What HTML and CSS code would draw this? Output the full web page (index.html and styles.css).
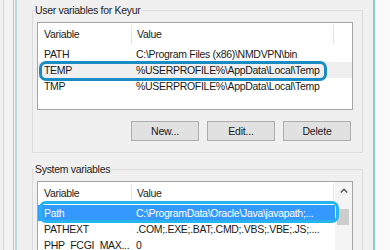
FILE: index.html
```html
<!DOCTYPE html>
<html lang="en">
<head>
    <meta charset="UTF-8">
    <meta name="viewport" content="width=device-width, initial-scale=1.0">
    <title>Environment Variables</title>
    <link rel="stylesheet" href="styles.css">
</head>
<body>

<div class="window">
    <div class="frame-left"></div>

    <div class="content">
        <!-- User variables -->
        <fieldset class="group">
            <legend>User variables for Keyur</legend>
            <div class="list user-list">
                <div class="list-body">
                    <div class="list-head">
                        <span class="col-var">Variable</span>
                        <span class="col-val">Value</span>
                    </div>
                    <div class="row">
                        <span class="col-var">PATH</span>
                        <span class="col-val">C:\Program Files (x86)\NMDVPN\bin</span>
                    </div>
                    <div class="row inactive mark-dark">
                        <span class="col-var">TEMP</span>
                        <span class="col-val">%USERPROFILE%\AppData\Local\Temp</span>
                    </div>
                    <div class="row">
                        <span class="col-var">TMP</span>
                        <span class="col-val">%USERPROFILE%\AppData\Local\Temp</span>
                    </div>
                </div>
            </div>
            <div class="buttons">
                <button class="button">New...</button>
                <button class="button">Edit...</button>
                <button class="button">Delete</button>
            </div>
        </fieldset>

        <!-- System variables -->
        <fieldset class="group system">
            <legend>System variables</legend>
            <div class="list system-list">
                <div class="list-body">
                    <div class="list-head">
                        <span class="col-var">Variable</span>
                        <span class="col-val">Value</span>
                    </div>
                    <div class="row selected mark-light">
                        <span class="col-var">Path</span>
                        <span class="col-val">C:\ProgramData\Oracle\Java\javapath;...</span>
                    </div>
                    <div class="row">
                        <span class="col-var">PATHEXT</span>
                        <span class="col-val">.COM;.EXE;.BAT;.CMD;.VBS;.VBE;.JS;....</span>
                    </div>
                    <div class="row">
                        <span class="col-var">PHP_FCGI_MAX...</span>
                        <span class="col-val">0</span>
                    </div>
                </div>
                <div class="scrollbar">
                    <div class="scroll-up">
                        <svg width="8" height="5" viewBox="0 0 8 5">
                            <path d="M0.8 4.4 L4 1.2 L7.2 4.4" fill="none" stroke="#555" stroke-width="1.4"/>
                        </svg>
                    </div>
                    <div class="thumb"></div>
                </div>
            </div>
        </fieldset>
    </div>

    <div class="frame-right"></div>
</div>

</body>
</html>
```

FILE: styles.css
```css
/* Windows 8 style environment variables dialog */
body {
    margin: 0;
    background-color: #f0f0f0;
    font-family: "Liberation Sans", Arial, sans-serif;
    font-size: 10.5px;
    letter-spacing: -0.3px;
    color: #1a1a1a;
    overflow: hidden;
}
.window {
    display: flex;
    height: 250px;
    overflow: hidden;
}
.frame-left {
    width: 17px;
    flex: none;
    background: linear-gradient(to right,
        #f0f0f0 0, #f0f0f0 3px, #d6d6d6 3px, #d6d6d6 4px,
        #f2f2f2 4px, #f2f2f2 13px, #c4c4c4 13px, #c4c4c4 14px,
        #eef4f4 14px, #eef4f4 15px, #bcdcdc 15px, #bcdcdc 17px);
}
.content {
    width: 356px;
    flex: none;
}
.frame-right {
    flex: 1;
    background-color: #fafafa;
    border-left: 2px solid #86cdc6;
}
.group {
    margin: 3px 10px 0 15px;
    padding: 5px 9px 11px 4px;
    border: 1px solid #dcdcdc;
    min-width: 0;
}
.group legend {
    margin-left: -3px;
    padding: 0 1px;
    line-height: 14px;
    color: #222;
}
.system {
    margin-top: 9px;
}
.list {
    display: flex;
    background-color: #fff;
    border: 1px solid #a5a5a5;
}
.user-list {
    height: 86px;
}
.system-list {
    height: 80px;
}
.list-body {
    flex: 1;
}
.list-head {
    display: flex;
    height: 23px;
    align-items: center;
}
.list-head .col-var {
    border-right: 1px solid #e5e5e5;
    height: 19px;
    line-height: 19px;
}
.list-head .col-val {
    width: 196px;
    flex: none;
    border-right: 1px solid #e5e5e5;
    height: 19px;
    line-height: 19px;
}
.row {
    display: flex;
    height: 16px;
    line-height: 16px;
    position: relative;
}
.col-var {
    width: 87px;
    flex: none;
    padding-left: 6px;
    white-space: nowrap;
    overflow: hidden;
}
.col-val {
    padding-left: 5px;
    white-space: nowrap;
}
.inactive {
    background-color: #efefef;
}
.selected {
    background-color: #3399ff;
    color: #fff;
}
/* hand drawn highlight marks */
.mark-dark::after,
.mark-light::after {
    content: "";
    position: absolute;
    box-sizing: border-box;
    border-radius: 7px;
    z-index: 2;
}
.mark-dark::after {
    left: 1px;
    top: -1px;
    width: 288px;
    height: 20px;
    border: 3px solid #1a8cc4;
}
.mark-light::after {
    left: 1px;
    top: -4px;
    width: 300px;
    height: 22px;
    border: 3px solid #26b4ec;
}
.buttons {
    display: flex;
    justify-content: flex-end;
    gap: 8px;
    margin: 11px 2px 0 0;
}
.button {
    width: 68px;
    height: 20px;
    padding: 0;
    font-family: inherit;
    font-size: 10.5px;
    letter-spacing: -0.2px;
    color: #1a1a1a;
    background-color: #e1e1e1;
    border: 1px solid #adadad;
}
.scrollbar {
    width: 17px;
    flex: none;
    background-color: #f4f4f4;
}
.scroll-up {
    height: 17px;
    display: flex;
    align-items: center;
    justify-content: center;
}
.thumb {
    margin: 10px 3px 0 2px;
    height: 16px;
    background-color: #cdcdcd;
}
```
